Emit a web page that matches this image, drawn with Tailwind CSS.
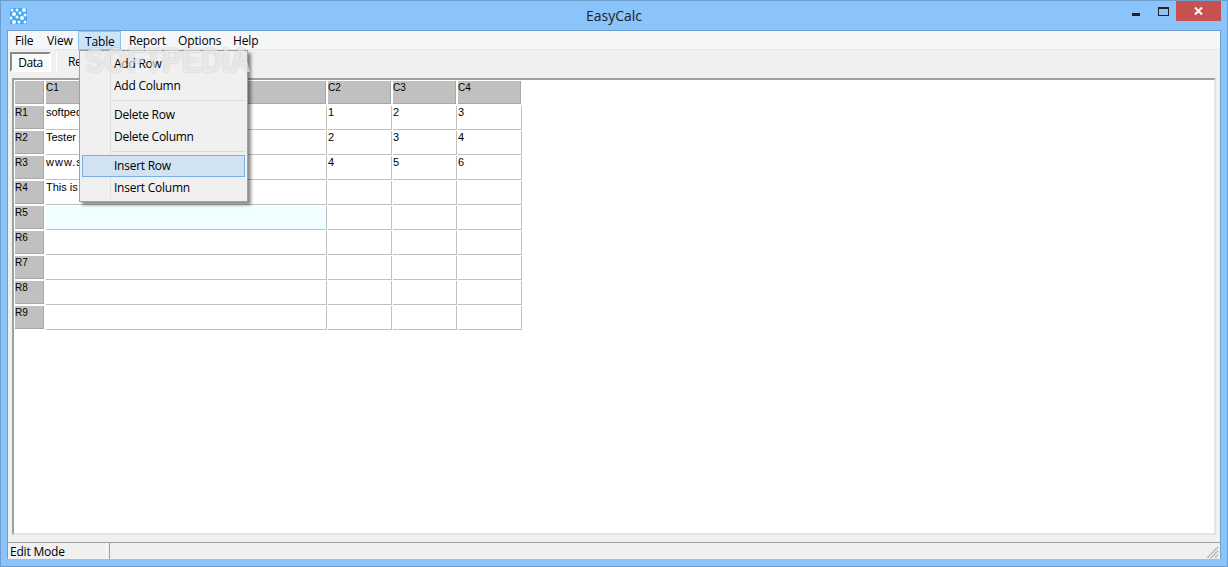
<!DOCTYPE html>
<html lang="en">
<head>
  <meta charset="UTF-8" />
  <title>EasyCalc</title>
  <script src="https://cdn.jsdelivr.net/npm/@tailwindcss/browser@4"></script>
</head>
<body class="w-[1228px] h-[567px] overflow-hidden bg-[#8ac4fa] font-['Open_Sans',sans-serif] text-black">
  <div class="relative w-full h-full flex flex-col border border-[#6d9fce]">

    <!-- Title bar -->
    <div class="h-[29px] shrink-0 flex items-start relative">
      <svg class="absolute left-[9px] top-[7px]" width="17" height="16" viewBox="0 0 17 16">
        <rect width="17" height="16" fill="#3fa9f5"/>
        <g fill="#fff">
          <circle cx="2" cy="2" r="1.5"/><circle cx="7" cy="2" r="1.5"/><circle cx="14" cy="2" r="2"/>
          <circle cx="4" cy="6" r="2"/><circle cx="10" cy="5" r="1.5"/><circle cx="15" cy="7" r="1.5"/>
          <circle cx="1" cy="10" r="1.5"/><circle cx="7" cy="9" r="1.5"/><circle cx="12" cy="10" r="2"/>
          <circle cx="4" cy="14" r="2"/><circle cx="9" cy="14" r="1.5"/><circle cx="15" cy="14" r="1.5"/>
        </g>
      </svg>
      <div class="w-full text-center text-[14px] leading-[30px] text-[#222]">EasyCalc</div>
      <svg class="absolute left-[1131px] top-[12px]" width="8" height="3"><rect width="8" height="3" fill="#222"/></svg>
      <svg class="absolute left-[1157px] top-[6px]" width="11" height="9"><rect x="0.5" y="0.5" width="10" height="8" fill="none" stroke="#222"/><rect width="11" height="2" fill="#222"/></svg>
      <div class="absolute left-[1175px] top-0 w-[45px] h-[20px] bg-[#c75050] flex items-center justify-center">
        <svg width="9" height="8" viewBox="0 0 9 8"><path d="M1 0.5 L8 7.5 M8 0.5 L1 7.5" stroke="#fff" stroke-width="2"/></svg>
      </div>
    </div>

    <!-- Client area -->
    <div class="ml-[6px] mr-[6px] h-[529px] flex flex-col border-t border-x border-[#6d9fce] bg-[#f0f0f0]">
      <!-- Menu bar -->
      <div class="h-[19px] shrink-0 flex items-center bg-[#f5f6f7] border-b border-[#e8e9ea] text-[12px] tracking-[-0.15px]">
        <span class="w-[36px] pl-[7px] pt-[2px]">File</span>
        <span class="w-[34px] pl-[3px] pt-[2px]">View</span>
        <span class="w-[43px] h-[19px] leading-[20px] pl-[6px] bg-[#cce4f7] border border-[#93c0e8]">Table</span>
        <span class="w-[49px] pl-[8px] pt-[2px]">Report</span>
        <span class="w-[56px] pl-[8px] pt-[2px]">Options</span>
        <span class="pl-[7px] pt-[2px]">Help</span>
      </div>

      <!-- Tab row -->
      <div class="h-[28px] shrink-0 flex items-start pl-[2px] pt-[2px] text-[12px] tracking-[-0.5px]">
        <div class="w-[41px] h-[20px] leading-[17px] text-center bg-[#fafafa] border-2 border-t-[#8a8a8a] border-l-[#8a8a8a] border-r-white border-b-white">Data</div>
        <div class="ml-[5px] w-[1px] h-[21px] bg-[#a0a0a0] border-r border-white"></div>
        <div class="ml-[11px] leading-[20px]">Report</div>
      </div>

      <!-- Sheet panel -->
      <div class="mx-[4px] h-[457px] shrink-0 border-2 border-t-[#a0a0a0] border-l-[#a0a0a0] border-r-[#e4e4e4] border-b-[#e4e4e4] bg-white pl-px pt-px">
        <div class="grid grid-cols-[31px_282px_65px_65px_65px] grid-rows-[25px_repeat(9,25px)] w-[508px] text-[11px] leading-[13px] font-['Liberation_Sans',sans-serif]">
          <div class="bg-[#c0c0c0] border-r border-b border-[#a8a8a8] mr-[2px] mb-[2px]"></div>
          <div class="bg-[#c0c0c0] border-r border-b border-[#a8a8a8] mr-[2px] mb-[2px] text-[10px] leading-[10px] pt-[2px]">C1</div>
          <div class="bg-[#c0c0c0] border-r border-b border-[#a8a8a8] mr-[2px] mb-[2px] text-[10px] leading-[10px] pt-[2px]">C2</div>
          <div class="bg-[#c0c0c0] border-r border-b border-[#a8a8a8] mr-[2px] mb-[2px] text-[10px] leading-[10px] pt-[2px]">C3</div>
          <div class="bg-[#c0c0c0] border-r border-b border-[#a8a8a8] mr-[2px] mb-[2px] text-[10px] leading-[10px] pt-[2px]">C4</div>

          <div class="bg-[#c0c0c0] border-r border-b border-[#a8a8a8] mr-[2px] mb-[2px] text-[10px] leading-[10px] pt-[2px]">R1</div>
          <div class="border-r border-b border-[#c0c0c0] mr-px mb-px">softpedia</div>
          <div class="border-r border-b border-[#c0c0c0] mr-px mb-px">1</div>
          <div class="border-r border-b border-[#c0c0c0] mr-px mb-px">2</div>
          <div class="border-r border-b border-[#c0c0c0] mr-px mb-px">3</div>

          <div class="bg-[#c0c0c0] border-r border-b border-[#a8a8a8] mr-[2px] mb-[2px] text-[10px] leading-[10px] pt-[2px]">R2</div>
          <div class="border-r border-b border-[#c0c0c0] mr-px mb-px">Tester</div>
          <div class="border-r border-b border-[#c0c0c0] mr-px mb-px">2</div>
          <div class="border-r border-b border-[#c0c0c0] mr-px mb-px">3</div>
          <div class="border-r border-b border-[#c0c0c0] mr-px mb-px">4</div>

          <div class="bg-[#c0c0c0] border-r border-b border-[#a8a8a8] mr-[2px] mb-[2px] text-[10px] leading-[10px] pt-[2px]">R3</div>
          <div class="border-r border-b border-[#c0c0c0] mr-px mb-px tracking-[1px]">www.softpedia.com</div>
          <div class="border-r border-b border-[#c0c0c0] mr-px mb-px">4</div>
          <div class="border-r border-b border-[#c0c0c0] mr-px mb-px">5</div>
          <div class="border-r border-b border-[#c0c0c0] mr-px mb-px">6</div>

          <div class="bg-[#c0c0c0] border-r border-b border-[#a8a8a8] mr-[2px] mb-[2px] text-[10px] leading-[10px] pt-[2px]">R4</div>
          <div class="border-r border-b border-[#c0c0c0] mr-px mb-px">This is a test</div>
          <div class="border-r border-b border-[#c0c0c0] mr-px mb-px"></div>
          <div class="border-r border-b border-[#c0c0c0] mr-px mb-px"></div>
          <div class="border-r border-b border-[#c0c0c0] mr-px mb-px"></div>

          <div class="bg-[#c0c0c0] border-r border-b border-[#a8a8a8] mr-[2px] mb-[2px] text-[10px] leading-[10px] pt-[2px]">R5</div>
          <div class="border-r border-b border-[#c0c0c0] mr-px mb-px bg-[#f0ffff]"></div>
          <div class="border-r border-b border-[#c0c0c0] mr-px mb-px"></div>
          <div class="border-r border-b border-[#c0c0c0] mr-px mb-px"></div>
          <div class="border-r border-b border-[#c0c0c0] mr-px mb-px"></div>

          <div class="bg-[#c0c0c0] border-r border-b border-[#a8a8a8] mr-[2px] mb-[2px] text-[10px] leading-[10px] pt-[2px]">R6</div>
          <div class="border-r border-b border-[#c0c0c0] mr-px mb-px"></div>
          <div class="border-r border-b border-[#c0c0c0] mr-px mb-px"></div>
          <div class="border-r border-b border-[#c0c0c0] mr-px mb-px"></div>
          <div class="border-r border-b border-[#c0c0c0] mr-px mb-px"></div>

          <div class="bg-[#c0c0c0] border-r border-b border-[#a8a8a8] mr-[2px] mb-[2px] text-[10px] leading-[10px] pt-[2px]">R7</div>
          <div class="border-r border-b border-[#c0c0c0] mr-px mb-px"></div>
          <div class="border-r border-b border-[#c0c0c0] mr-px mb-px"></div>
          <div class="border-r border-b border-[#c0c0c0] mr-px mb-px"></div>
          <div class="border-r border-b border-[#c0c0c0] mr-px mb-px"></div>

          <div class="bg-[#c0c0c0] border-r border-b border-[#a8a8a8] mr-[2px] mb-[2px] text-[10px] leading-[10px] pt-[2px]">R8</div>
          <div class="border-r border-b border-[#c0c0c0] mr-px mb-px"></div>
          <div class="border-r border-b border-[#c0c0c0] mr-px mb-px"></div>
          <div class="border-r border-b border-[#c0c0c0] mr-px mb-px"></div>
          <div class="border-r border-b border-[#c0c0c0] mr-px mb-px"></div>

          <div class="bg-[#c0c0c0] border-r border-b border-[#a8a8a8] mr-[2px] mb-[2px] text-[10px] leading-[10px] pt-[2px]">R9</div>
          <div class="border-r border-b border-[#c0c0c0] mr-px mb-px"></div>
          <div class="border-r border-b border-[#c0c0c0] mr-px mb-px"></div>
          <div class="border-r border-b border-[#c0c0c0] mr-px mb-px"></div>
          <div class="border-r border-b border-[#c0c0c0] mr-px mb-px"></div>
        </div>
      </div>

      <!-- Status bar -->
      <div class="mt-auto h-[17px] shrink-0 flex text-[12px] leading-[17px] tracking-[-0.2px] border-t border-[#a0a0a0]">
        <div class="w-[99px] pl-[2px] border-r border-white">Edit Mode</div>
        <div class="flex-1 ml-[2px] border-l border-[#a0a0a0]"></div>
        <svg class="mr-[1px] mt-[3px]" width="13" height="13" viewBox="0 0 13 13"><path d="M12 1 L1 12 M12 5 L5 12 M12 9 L9 12" stroke="#a0a0a0" stroke-width="1.5" stroke-dasharray="1.5 0.7"/></svg>
      </div>
    </div>

    <!-- Table menu -->
    <div class="absolute left-[78px] top-[49px] w-[169px] h-[152px] bg-[#f0f0f0] border border-[#a0a0a0] shadow-[3px_3px_3px_rgba(0,0,0,0.45)] text-[12px] tracking-[-0.25px] p-[2px]">
      <div class="absolute left-[30px] top-[2px] bottom-[2px] w-px bg-[#e0e0e0]"></div>
      <div class="h-[22px] leading-[22px] pl-[32px]">Add Row</div>
      <div class="h-[22px] leading-[22px] pl-[32px]">Add Column</div>
      <div class="h-px bg-[#d8d8d8] ml-[30px] my-[3px]"></div>
      <div class="h-[22px] leading-[22px] pl-[32px] mt-[3px]">Delete Row</div>
      <div class="h-[22px] leading-[22px] pl-[32px]">Delete Column</div>
      <div class="h-px bg-[#d8d8d8] ml-[30px] my-[3px]"></div>
      <div class="relative h-[22px] leading-[20px] pl-[31px] mt-[3px] bg-[#d1e2f2] border border-[#78aee5]">Insert Row</div>
      <div class="h-[22px] leading-[22px] pl-[32px]">Insert Column</div>
    </div>

    <!-- Watermark -->
    <div class="absolute left-[84px] top-[40px] text-[29px] leading-[38px] font-bold font-['Liberation_Sans',sans-serif] text-white/60 scale-y-[1.2] [text-shadow:0_0_2px_rgba(0,0,0,0.2)] pointer-events-none">SOFTPEDIA</div>
  </div>
</body>
</html>
